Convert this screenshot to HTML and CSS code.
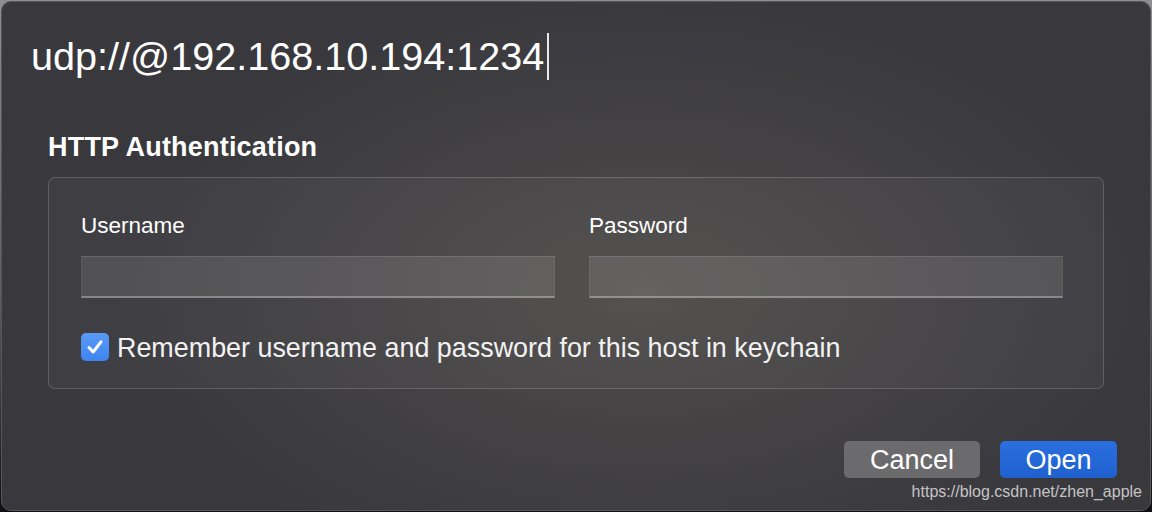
FILE: index.html
```html
<!DOCTYPE html>
<html>
<head>
<meta charset="utf-8">
<link rel="stylesheet" href="styles.css">
</head>
<body>
<div class="window">
  <div class="url"><span class="url-text">udp://@192.168.10.194:1234</span><span class="caret"></span></div>
  <div class="section">
    <div class="section-title">HTTP Authentication</div>
    <div class="panel">
      <div class="fields">
        <div class="field">
          <div class="label">Username</div>
          <div class="input"></div>
        </div>
        <div class="field">
          <div class="label">Password</div>
          <div class="input"></div>
        </div>
      </div>
      <div class="check-row">
        <span class="checkbox">
          <svg width="20" height="20" viewBox="0 0 20 20"><path d="M4 10.5 L8.2 15 L16 4.8" fill="none" stroke="#fff" stroke-width="3" stroke-linecap="round" stroke-linejoin="round"/></svg>
        </span>
        <span class="check-label">Remember username and password for this host in keychain</span>
      </div>
    </div>
  </div>
  <div class="buttons">
    <div class="btn cancel">Cancel</div>
    <div class="btn open">Open</div>
  </div>
  <div class="watermark">https://blog.csdn.net/zhen_apple</div>
</div>
</body>
</html>
```
FILE: styles.css
```css
html, body {
  margin: 0;
  padding: 0;
}
body {
  width: 1152px;
  height: 512px;
  background: linear-gradient(#8e8e90, #5a5a5c 60%, #111 100%);
  font-family: "Liberation Sans", Arial, sans-serif;
  color: #fff;
  overflow: hidden;
}
.window {
  position: relative;
  box-sizing: border-box;
  width: 1150px;
  height: 510px;
  margin: 1px 1px 0 1px;
  border: 1px solid #55555a;
  border-radius: 10px;
  background:
    radial-gradient(ellipse 520px 300px at 640px 290px, rgba(95, 92, 84, 0.55), rgba(95, 92, 84, 0) 100%),
    #39383d;
  overflow: hidden;
}
.url {
  display: flex;
  align-items: center;
  padding: 30px 0 0 29px;
  height: 48px;
}
.url-text {
  font-size: 39.6px;
  line-height: 48px;
}
.caret {
  display: inline-block;
  width: 2px;
  height: 47px;
  margin-left: 3px;
  background: #e8e8e8;
}
.section {
  padding: 51px 47px 0 46px;
}
.section-title {
  font-size: 27px;
  font-weight: bold;
  line-height: 32px;
  height: 32px;
  letter-spacing: 0.2px;
}
.panel {
  box-sizing: border-box;
  margin-top: 14px;
  width: 1056px;
  height: 212px;
  border: 1px solid rgba(255, 255, 255, 0.17);
  border-radius: 7px;
  background: rgba(255, 255, 255, 0.035);
  padding: 34px 39px 0 32px;
}
.fields {
  display: flex;
  gap: 34px;
}
.field {
  width: 474px;
}
.label {
  font-size: 22.5px;
  line-height: 28px;
  height: 28px;
}
.input {
  box-sizing: border-box;
  margin-top: 16px;
  height: 42px;
  background: rgba(255, 255, 255, 0.1);
  border-top: 1px solid rgba(255, 255, 255, 0.12);
  border-bottom: 2px solid rgba(255, 255, 255, 0.3);
  border-left: 1px solid rgba(255, 255, 255, 0.06);
  border-right: 1px solid rgba(255, 255, 255, 0.06);
}
.check-row {
  display: flex;
  align-items: center;
  gap: 8px;
  margin-top: 34px;
  height: 30px;
}
.checkbox {
  box-sizing: border-box;
  width: 28px;
  height: 28px;
  border-radius: 5px;
  background: linear-gradient(#5a9bf7, #3d84f0);
  display: flex;
  align-items: center;
  justify-content: center;
}
.checkbox svg {
  display: block;
}
.check-label {
  font-size: 26.9px;
  line-height: 30px;
  padding-top: 2px;
  color: #f2f2f2;
}
.buttons {
  display: flex;
  justify-content: flex-end;
  gap: 20px;
  padding: 52px 33px 0 0;
}
.btn {
  height: 37px;
  border-radius: 5px;
  font-size: 27px;
  line-height: 38px;
  text-align: center;
  color: #fff;
}
.cancel {
  width: 136px;
  background: #6b6b6e;
}
.open {
  width: 117px;
  background: linear-gradient(#2a6fe0, #1f60cf);
}
.watermark {
  position: absolute;
  right: 8px;
  bottom: 9px;
  font-size: 16px;
  line-height: 18px;
  color: #c4c4c6;
}
```
